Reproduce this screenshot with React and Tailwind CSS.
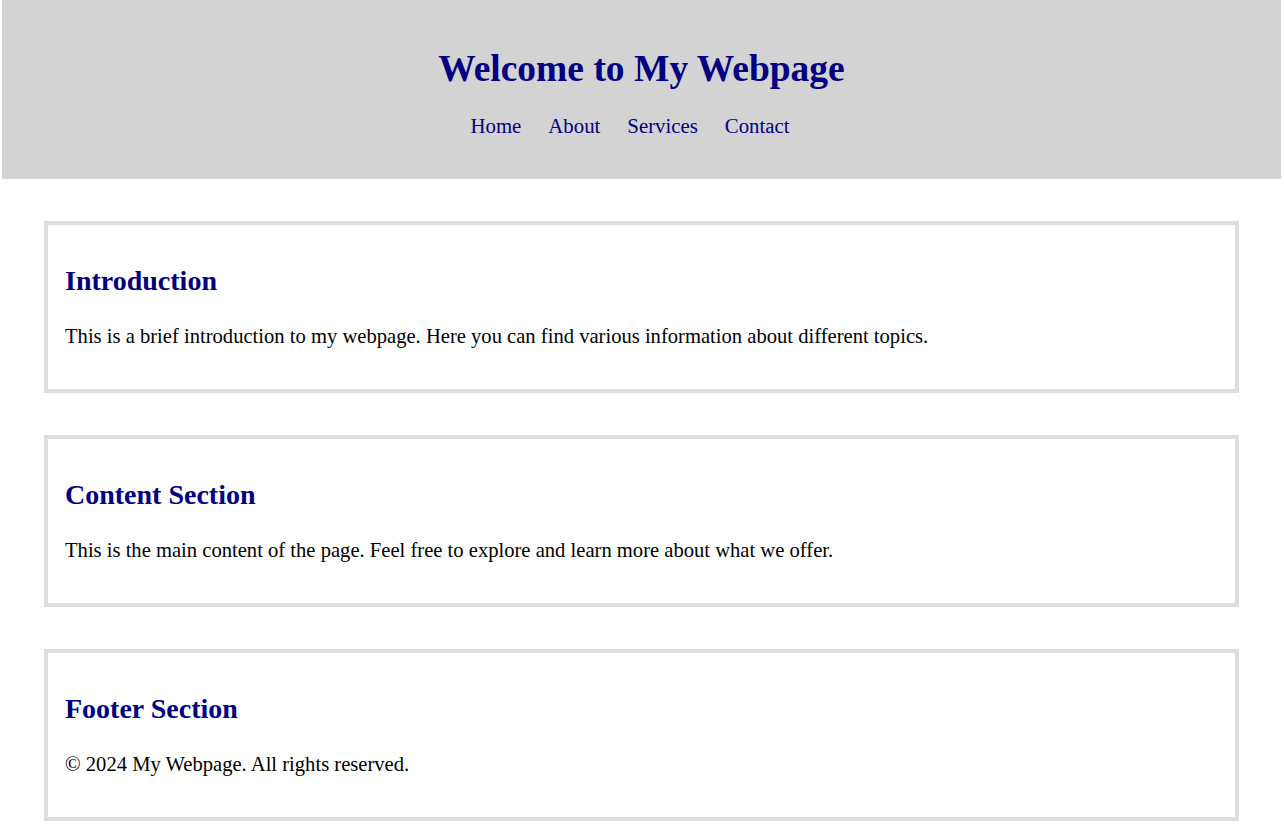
export default function App() {
  const sections = [
    {
      title: "Introduction",
      text: "This is a brief introduction to my webpage. Here you can find various information about different topics.",
    },
    {
      title: "Content Section",
      text: "This is the main content of the page. Feel free to explore and learn more about what we offer.",
    },
    {
      title: "Footer Section",
      text: "© 2024 My Webpage. All rights reserved.",
    },
  ];

  return (
    <div className="min-h-screen bg-white font-['Liberation_Serif',serif] text-black pb-[11px]">
      <header className="ml-[2px] mr-[3px] bg-[#d3d3d3] pt-[48px] pb-[41px] text-center">
        <h1 className="text-[37.5px] font-bold leading-[42px] text-[#000080]">Welcome to My Webpage</h1>
        <nav className="mt-[24px] flex justify-center gap-[27px] pr-[23px] text-[20.8px] leading-[24px] text-[#000080]">
          <a href="#">Home</a>
          <a href="#">About</a>
          <a href="#">Services</a>
          <a href="#">Contact</a>
        </nav>
      </header>

      <main className="ml-[44px] mt-[42px] flex w-[1195px] flex-col gap-[42px]">
        {sections.map((s) => (
          <section key={s.title} className="border-4 border-[#dddddd] px-[17px] pt-[40px] pb-[41px]">
            <h2 className="text-[28px] font-bold leading-[32px] text-[#000080]">{s.title}</h2>
            <p className="mt-[28px] text-[20.6px] leading-[23px]">{s.text}</p>
          </section>
        ))}
      </main>
    </div>
  );
}
